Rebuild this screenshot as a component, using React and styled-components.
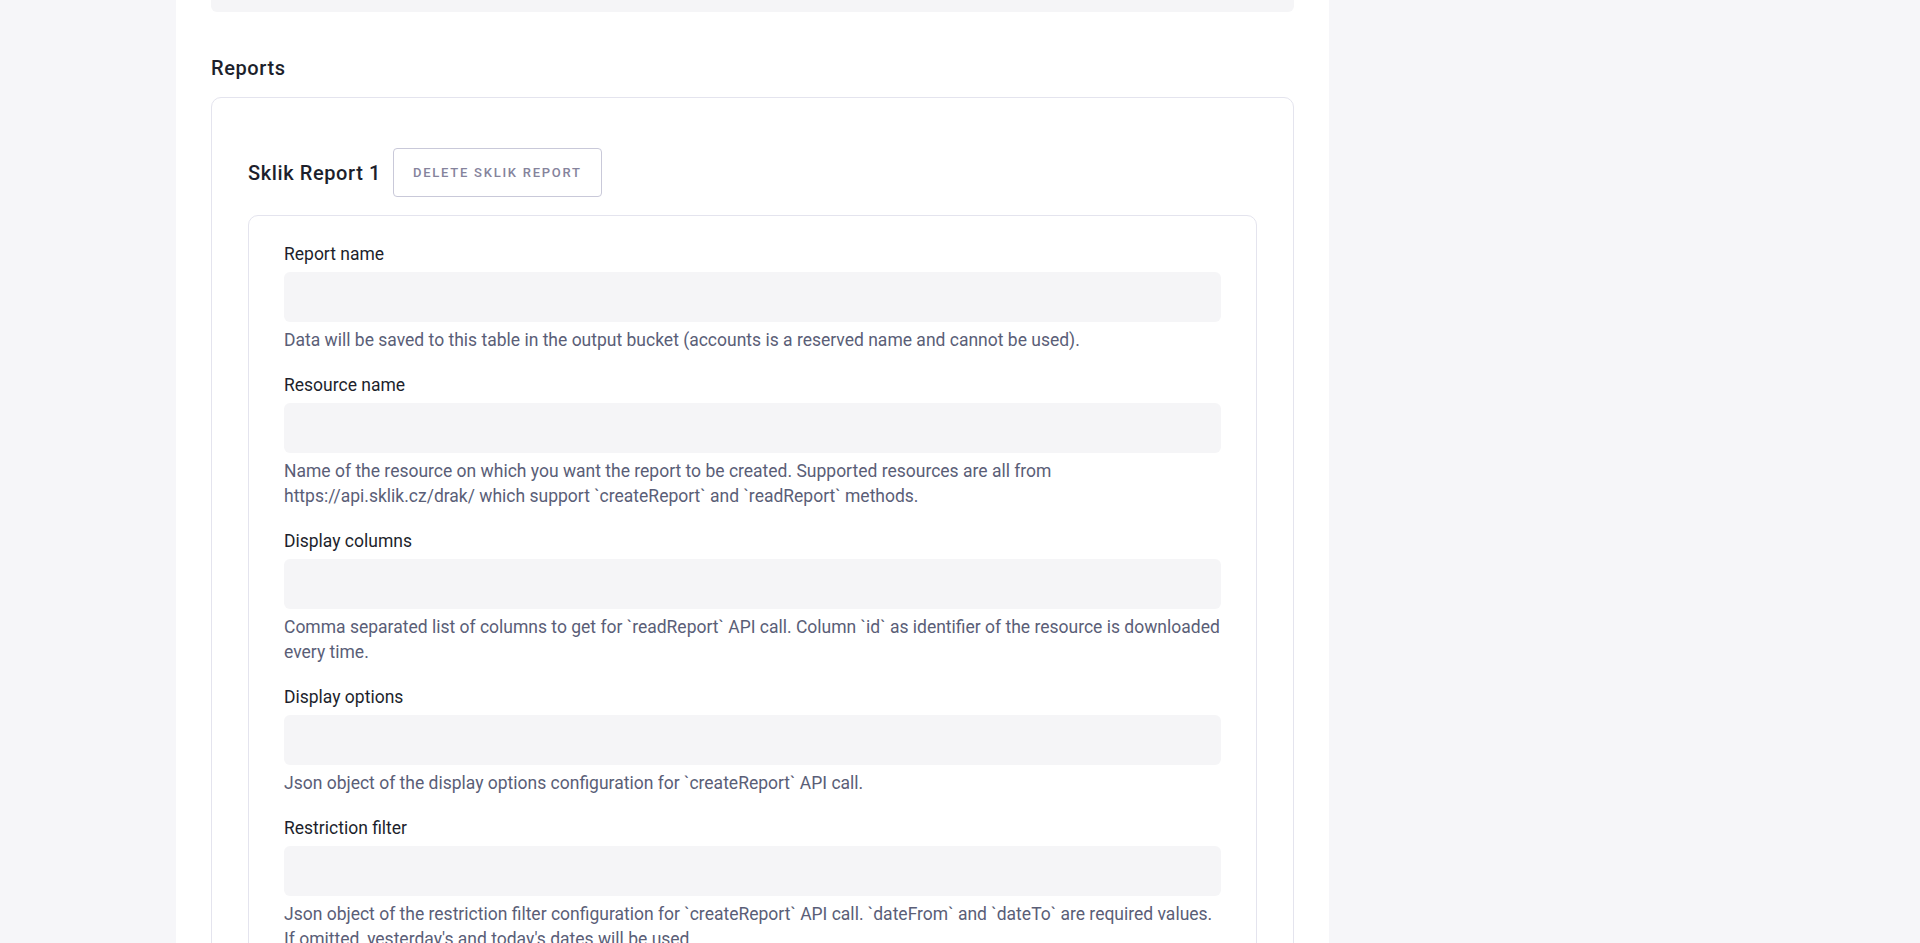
import React from "react";
import styled, { createGlobalStyle } from "styled-components";

const GlobalStyle = createGlobalStyle`
  body {
    margin: 0;
    background-color: #f6f6f9;
    font-family: Roboto, "Liberation Sans", sans-serif;
    color: #1d1f2c;
  }
`;

const Page = styled.div`
  display: flex;
  min-height: 100vh;
`;

const Panel = styled.main`
  margin-left: 176px;
  width: 1153px;
  background-color: white;
  padding: 0 35px;
  box-sizing: border-box;
`;

const PrevBlock = styled.div`
  height: 12px;
  background-color: #f5f5f7;
  border-radius: 0 0 6px 6px;
`;

const SectionTitle = styled.h2`
  margin: 44px 0 17px;
  font-size: 20px;
  line-height: 24px;
  font-weight: 500;
  letter-spacing: 0.6px;
  color: #1d1f2c;
`;

const Card = styled.section`
  border: 1px solid #e4e4ee;
  border-radius: 10px;
  padding: ${(p) => p.$pad};
  background-color: white;
`;

const ReportHeader = styled.div`
  display: flex;
  align-items: center;
  gap: 12px;
  margin-bottom: 18px;
`;

const ReportTitle = styled.h3`
  margin: 0;
  font-size: 20px;
  line-height: 24px;
  font-weight: 500;
  letter-spacing: 0.6px;
  color: #1d1f2c;
`;

const OutlineButton = styled.button`
  height: 49px;
  padding: 0 19px;
  border: 1px solid #c9c9d9;
  border-radius: 4px;
  background: white;
  font-family: Roboto, "Liberation Sans", sans-serif;
  font-size: 13px;
  font-weight: 500;
  letter-spacing: 1.75px;
  text-transform: uppercase;
  color: #85839c;
  cursor: pointer;
`;

const Field = styled.div`
  display: flex;
  flex-direction: column;
  margin-bottom: 19px;
`;

const Label = styled.label`
  font-size: 17.5px;
  line-height: 24px;
  color: #1d1f2c;
  margin-bottom: 6px;
`;

const Input = styled.input`
  height: 50px;
  border: none;
  border-radius: 6px;
  background-color: #f5f5f7;
  padding: 0 16px;
  font-family: Roboto, "Liberation Sans", sans-serif;
  font-size: 17.5px;
  outline: none;
`;

const Help = styled.p`
  margin: 6px 0 0;
  font-size: 17.5px;
  line-height: 25.6px;
  color: #5a5e77;
`;

const fields = [
  {
    label: "Report name",
    help: "Data will be saved to this table in the output bucket (accounts is a reserved name and cannot be used).",
  },
  {
    label: "Resource name",
    help: "Name of the resource on which you want the report to be created. Supported resources are all from https://api.sklik.cz/drak/ which support `createReport` and `readReport` methods.",
  },
  {
    label: "Display columns",
    help: "Comma separated list of columns to get for `readReport` API call. Column `id` as identifier of the resource is downloaded every time.",
  },
  {
    label: "Display options",
    help: "Json object of the display options configuration for `createReport` API call.",
  },
  {
    label: "Restriction filter",
    help: "Json object of the restriction filter configuration for `createReport` API call. `dateFrom` and `dateTo` are required values. If omitted, yesterday's and today's dates will be used.",
  },
];

export default function App() {
  return (
    <Page>
      <GlobalStyle />
      <Panel>
        <PrevBlock />
        <SectionTitle>Reports</SectionTitle>
        <Card $pad="50px 36px 36px">
          <ReportHeader>
            <ReportTitle>Sklik Report 1</ReportTitle>
            <OutlineButton>Delete Sklik Report</OutlineButton>
          </ReportHeader>
          <Card $pad="26px 35px 20px">
            {fields.map((f) => (
              <Field key={f.label}>
                <Label>{f.label}</Label>
                <Input type="text" />
                <Help>{f.help}</Help>
              </Field>
            ))}
          </Card>
        </Card>
      </Panel>
    </Page>
  );
}
